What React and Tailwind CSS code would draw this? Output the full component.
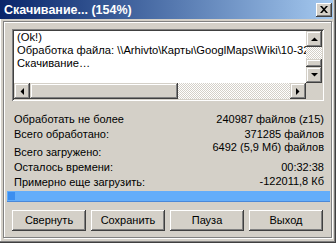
import React from 'react'

const raised = 'shadow-[inset_-1px_-1px_0_#404040,inset_1px_1px_0_#d4d0c8,inset_-2px_-2px_0_#808080,inset_2px_2px_0_#fff]'
const btn3d = 'shadow-[inset_-1px_-1px_0_#404040,inset_1px_1px_0_#fff,inset_-2px_-2px_0_#808080,inset_2px_2px_0_#d4d0c8]'
const dither = 'bg-[repeating-conic-gradient(#d4d0c8_0%_25%,#fff_0%_50%)] bg-[length:2px_2px]'

const Arrow = ({ dir }) => {
  const pts = {
    up: '0,4 7,4 3.5,0.5',
    down: '0,0 7,0 3.5,3.5',
    left: '4,0 4,7 0.5,3.5',
    right: '0,0 0,7 3.5,3.5',
  }[dir]
  const vertical = dir === 'up' || dir === 'down'
  return (
    <svg width={vertical ? 7 : 4} height={vertical ? 4 : 7} viewBox={vertical ? '0 0 7 4' : '0 0 4 7'}>
      <polygon points={pts} fill="#000" />
    </svg>
  )
}

const ScrollBtn = ({ dir }) => (
  <div className={`w-[16px] h-[16px] bg-[#d4d0c8] flex items-center justify-center ${raised}`}>
    <Arrow dir={dir} />
  </div>
)

const Button = ({ children }) => (
  <div className={`w-[74px] h-[21px] bg-[#d4d0c8] flex items-center justify-center ${btn3d}`}>
    {children}
  </div>
)

const App = () => {
  return (
    <div className="w-[336px] h-[243px] bg-[#d4d0c8] flex flex-col overflow-hidden font-['Liberation_Sans',Arial,sans-serif] text-[11px] leading-[13px] text-black shadow-[inset_-1px_-1px_0_#404040,inset_-2px_-2px_0_#808080,inset_1px_0_0_#fff]">
      {/* title bar */}
      <div className="h-[19px] w-[333px] flex items-center justify-between bg-gradient-to-r from-[#0a246a] to-[#a6caf0]">
        <span className="pl-[4px] pt-[2px] text-white font-bold text-[12.5px] leading-[15px] whitespace-nowrap">
          Скачивание... (154%)
        </span>
        <div className={`w-[16px] h-[14px] mr-[1px] bg-[#d4d0c8] flex items-center justify-center ${btn3d}`}>
          <svg width="8" height="7" viewBox="0 0 8 7">
            <path d="M0 0h2l2 2.2L6 0h2L5 3.5 8 7H6L4 4.8 2 7H0l3-3.5z" fill="#000" />
          </svg>
        </div>
      </div>

      {/* panel */}
      <div className="mt-[2px] ml-[3px] w-[329px] h-[217px] border border-[#808080] shadow-[inset_1px_1px_0_#fff,1px_1px_0_#fff] flex flex-col">
        {/* memo */}
        <div className="ml-[8px] mt-[7px] w-[312px] h-[72px] p-[2px] bg-white shadow-[inset_1px_1px_0_#808080,inset_-1px_-1px_0_#fff,inset_2px_2px_0_#404040,inset_-2px_-2px_0_#d4d0c8]">
          <div className="flex h-[52px]">
            <div className="w-[292px] overflow-hidden whitespace-nowrap pl-[3px] text-[11.2px]">
              <div>(Ok!)</div>
              <div>Обработка файла: \\Arhivto\Карты\GooglMaps\Wiki\10-32\tiles</div>
              <div>Скачивание…</div>
            </div>
            <div className="w-[16px] flex flex-col">
              <ScrollBtn dir="up" />
              <div className={`flex-1 ${dither}`} />
              <div className={`h-[8px] bg-[#d4d0c8] ${raised}`} />
              <ScrollBtn dir="down" />
            </div>
          </div>
          <div className="flex h-[16px]">
            <ScrollBtn dir="left" />
            <div className={`w-[148px] bg-[#d4d0c8] ${raised}`} />
            <div className={`flex-1 ${dither}`} />
            <ScrollBtn dir="right" />
            <div className="w-[16px] bg-[#d4d0c8]" />
          </div>
        </div>

        {/* stats */}
        <div className="flex justify-between ml-[10px] mr-[7px] mt-[12px] h-[76px]">
          <div className="flex flex-col">
            <div>Обработать не более</div>
            <div className="mt-[2px]">Всего обработано:</div>
            <div className="mt-[5px]">Всего загружено:</div>
            <div className="mt-[2px]">Осталось времени:</div>
            <div className="mt-[2px]">Примерно еще загрузить:</div>
          </div>
          <div className="flex flex-col items-end">
            <div>240987 файлов (z15)</div>
            <div className="mt-[2px]">371285 файлов</div>
            <div>6492 (5,9 Мб) файлов</div>
            <div className="mt-[7px]">00:32:38</div>
            <div className="mt-[1px]">-122011,8 Кб</div>
          </div>
        </div>

        {/* progress */}
        <div className="ml-[3px] mt-[2px] w-[323px] h-[11px] bg-[#63adfa] border-b border-[#4a88d8] flex items-stretch py-[1px] pl-[1px]">
          <div className="w-[7px] bg-[#3b8ef0]" />
        </div>

        {/* buttons */}
        <div className="flex gap-[5px] ml-[8px] mt-[8px]">
          <Button>Свернуть</Button>
          <Button>Сохранить</Button>
          <Button>Пауза</Button>
          <Button>Выход</Button>
        </div>
      </div>
    </div>
  )
}

export default App
